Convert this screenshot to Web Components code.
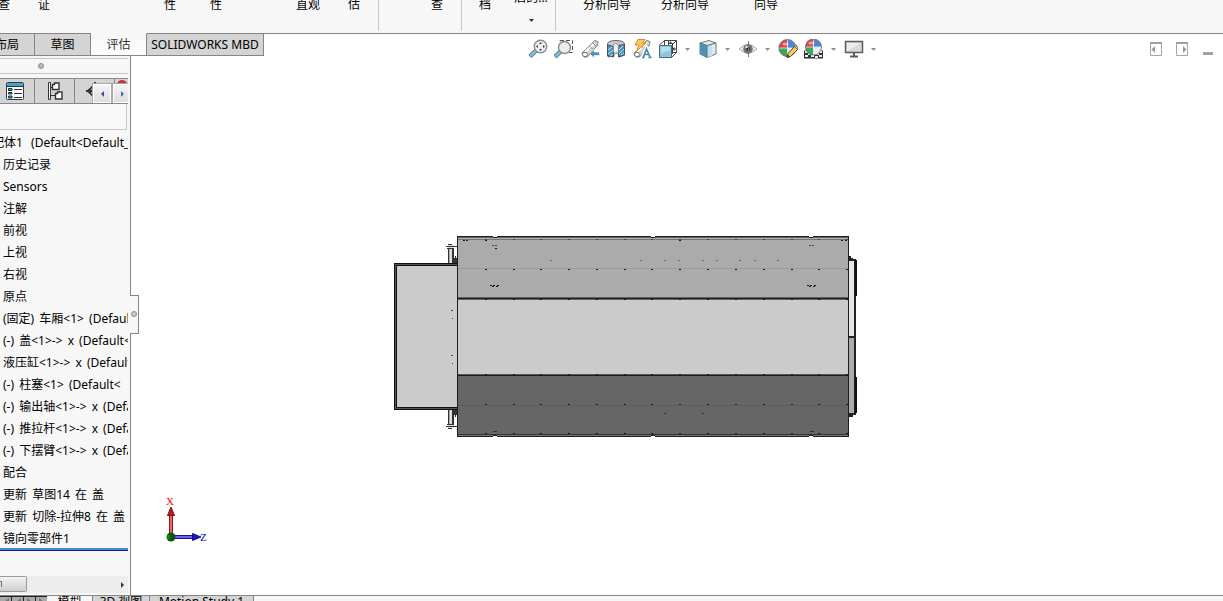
<!DOCTYPE html>
<html lang="zh-CN">
<head>
<meta charset="utf-8">
<title>SOLIDWORKS</title>
<style>
html, body { height: 100%; margin: 0; overflow: hidden; }
body { font: 12px/16px "Noto Sans", "Noto Sans CJK SC", sans-serif; color: #000; background: #fff;
  --line: #868686; --soft: #c6c6c6; --panel: #f7f7f7; --tab: #d4d4d4; }
</style>
</head>
<body>
<cad-app></cad-app>
<script>
const base = `*{box-sizing:border-box} button{font:inherit;color:inherit;border:0;padding:0;margin:0;background:none;white-space:nowrap} svg{display:block}`;
function define(name, html) {
  const t = document.createElement('template');
  t.innerHTML = html.replace('<style>', '<style>' + base);
  customElements.define(name, class extends HTMLElement {
    constructor() {
      super();
      this.attachShadow({ mode: 'open' }).append(t.content.cloneNode(true));
    }
  });
}

define('cad-ribbon', `<style>
:host{display:flex;height:34px;background:var(--panel);border-bottom:1px solid var(--line);overflow:hidden}
.group{display:flex;flex:none;height:31px;padding-right:1px;border-right:1px solid var(--soft)}
.group:last-child{border:0}
button{width:46px;height:16px;margin-top:-3px;flex:none;text-align:center}
.first{margin-left:-25px}.far{margin-left:80px}.mid{margin-left:46px}.lone{margin-left:35px}
.wide{width:78px}.lead{margin-left:12px}.next{margin-left:3px}
.two{height:32px;margin-top:-10px;display:flex;flex-direction:column;align-items:center}
.two svg{margin-top:13px}
</style>
<div class="group"><button class="first">检查</button><button>证</button><button class="far">性</button><button>性</button><button class="mid">直观</button><button>估</button></div>
<div class="group"><button class="lone">查</button></div>
<div class="group"><button>档</button><button class="two"><span>后的...</span><svg width="5" height="3"><path d="M0 0H5L2.500 3Z" fill="#333"/></svg></button></div>
<div class="group"><button class="wide lead">分析向导</button><button class="wide">分析向导</button><button class="wide next">向导</button></div>`);

define('cad-command-tabs', `<style>
:host{display:flex;height:23px;margin-top:-1px;width:264px;overflow:hidden;position:relative;z-index:1}
button{height:23px;background:var(--tab);border:1px solid var(--line);border-left:0;flex:none}
.a{width:35px;text-align:right;padding-right:15px;direction:rtl}.b{width:56px}.c{width:56px;background:linear-gradient(#f7f7f7,#fdfdfd);border-top-color:var(--panel);color:#333}.d{flex:1}
</style><button class="a">布局</button><button class="b">草图</button><button class="c">评估</button><button class="d">SOLIDWORKS MBD</button>`);

const icon = (label, body) => `<button aria-label="${label}"><svg width="20" height="20" viewBox="0 0 20 20">${body}</svg></button>`;
const caret = `<button class="caret" aria-label="更多"><svg width="8" height="20"><path d="M1 9H6L3.500 12Z" fill="#8e8e94"/></svg></button>`;
const ball = (x, y, r) => `<g transform="translate(${x} ${y})"><circle r="${r}" fill="#4c86d8"/><path d="M0 0V${-r}A${r} ${r} 0 0 0 ${-r} 0Z" fill="#df4348"/><path d="M0 0H${-r}A${r} ${r} 0 0 0 0 ${r}Z" fill="#3ca955"/><path d="M0 0V${r}A${r} ${r} 0 0 0 ${r} 0Z" fill="#e9edf4"/><path d="M0 ${-r}V${r}M${-r} 0H${r}" stroke="#e9f1fa" stroke-width=".8"/><circle r="${r}" fill="none" stroke="#5b6675" stroke-width=".7"/><ellipse cx="-2" cy="-4" rx="3" ry="1.500" fill="#fff" opacity=".5"/></g>`;
const scope = `<path d="M2 14 11.500 5 14.500 1.500 18 2.500 17.500 6 8 17.500Q3 20 2 14Z" fill="#d6d3cf" stroke="#7d7d7d"/><path d="M5 13 15 4" stroke="#fff" stroke-width="2"/><path d="M9.500 7 13 10.500M13 4 16 7" stroke="#888"/><ellipse cx="5" cy="15.500" rx="2.500" ry="2.200" fill="#fff" stroke="#777"/>`;
define('cad-view-toolbar', `<style>
:host{display:flex;align-items:flex-start;padding-top:5px;height:32px}
.views{flex:1;display:flex;justify-content:center;gap:6px}
button{width:20px;height:20px;flex:none}.views .caret{width:8px}
.win{display:flex;gap:12px;padding:0 10px 0 7px}.win button{width:14px}.win button:last-child{width:12px}
</style><div class="views">
${icon('整屏显示全图', `<path d="M2 17.500 8 11.500" stroke="#477d9b" stroke-width="4.500"/><path d="M2.500 17 8 11.500" stroke="#86bdd6" stroke-width="2.500"/><circle cx="12.500" cy="7.500" r="6.200" fill="#eceff0" stroke="#858b90" stroke-width="1.400"/><path d="M12.500 3 14 5H11ZM12.500 12 11 10H14ZM8 7.500 10 6V9ZM17 7.500 15 9V6Z" fill="#414141"/>`)}
${icon('局部放大', `<path d="M6 1.500H18.500V13.500H6Z" fill="none" stroke="#555" stroke-dasharray="4 2"/><path d="M1 18 7 12" stroke="#477d9b" stroke-width="4.500"/><path d="M1.500 17.500 7 12" stroke="#86bdd6" stroke-width="2.500"/><circle cx="10.500" cy="8.500" r="6" fill="#e8eef0" stroke="#858b90" stroke-width="1.400"/>`)}
${icon('上一视图', `${scope}<path d="M9.500 14.500 14 10.500V13H19.500V16.500H14V19Z" fill="#4e92b5" stroke="#f6f6f6" stroke-width=".7"/>`)}
${icon('剖面视图', `<path d="M1.500 5Q2 1.500 10 1.500T18.500 5V16L13 18V14H8V17L2 18Z" fill="#c9c9c9" stroke="#666"/><path d="M1.500 6 7.500 7.500V18L1.500 16.500ZM12.500 6.500 18.500 5.500V16L12.500 18Z" fill="#4b91b5" stroke="#34586a"/><path d="M2 11 6 8M2 15 7 11M4 17 7 15M13 11 17 7M13 15 18 10M15 16 18 14" stroke="#c5e4f0"/><path d="M7.500 8Q7 4.500 10 4.500T12.500 8V14H7.500Z" fill="#f0f0f0" stroke="#777" stroke-width=".7"/>`)}
${icon('动态注解视图', `${scope}<path d="M6 .5H13L10.500 4H14L4.500 12 7 6H3Z" fill="#ffc563" stroke="#dd8b21"/><path d="M10.500 19 14.500 9.500 18.500 19M12 16H17" fill="none" stroke="#fff" stroke-width="4"/><path d="M10 18.500H12.500M16.500 18.500H19.500M11.500 18 14.500 10 18 18M12.500 15.500H16.500" fill="none" stroke="#478bb0" stroke-width="1.700"/>`)}
${icon('视图定向', `<path d="M1.500 6 6.500 1.500H18.500V13.500L13.500 18.500M6.500 1.500V6M18.500 1.500 13.500 6.500M10.500 1.500V6M14 10H18M13.500 13.500H18.500M14.500 4V15" fill="none" stroke="#444"/><path d="M14 10 16.500 8V12ZM12.500 2 14.500 5H10.500Z" fill="#444"/><path d="M1.500 6.500H13.500V18.500H1.500Z" fill="#91c5db" stroke="#426d82"/><path d="M3 8H12V12Q6 12 3 15Z" fill="#b4dfed"/>`)}${caret}
${icon('显示样式', `<path d="M2 4 11 1.500 18 4V15L9 18.500 2 15Z" fill="#e3e8ea" stroke="#6c777b"/><path d="M2 4 9 6.500V18.500L2 15Z" fill="#4c93b4"/><path d="M9 6.500 14 5V16.500L9 18.500Z" fill="#b9e1ee"/><path d="M2 4 9 6.500 18 4M9 6.500V18.500" fill="none" stroke="#56717d"/>`)}${caret}
${icon('隐藏/显示项目', `<path d="M1 10Q10 1 19 10 10 18 1 10Z" fill="#efefef" stroke="#aaa"/><circle cx="10" cy="10" r="4.800" fill="#747474"/><circle cx="10" cy="10" r="2" fill="#303030"/><path d="M10.500 2V18" stroke="#777"/><circle cx="8.500" cy="8" r="1.200" fill="#eee"/>`)}${caret}
${icon('编辑外观', `${ball(9.5, 9, 8.6)}<path d="M9 18.500 10 14.500 16.500 7.500 19.500 10.500 12.500 17.500Z" fill="#f4cf65" stroke="#4e4026"/><path d="M16.500 7.500 18 6 20 8.500 19.500 10.500Z" fill="#e7a8a0" stroke="#675"/><path d="M9 18.500 9.800 15.500 11.800 17.500Z" fill="#333"/>`)}
${icon('应用布景', `<path d="M0 11.500H19V19.500H0Z" fill="#333"/><path d="M1 12H4V14H1ZM15 12H18V14H15ZM4 14H6V16H4ZM13 14H15V16H13ZM1 16H4V18H1ZM7 16H10V18H7ZM15 16H18V18H15ZM11 17H14V19H11Z" fill="#eee"/>${ball(9.5, 8, 8)}`)}${caret}
${icon('视图设定', `<path d="M1.500 2.500H18.500V13.500H1.500Z" fill="#d9d9d9" stroke="#5c5c5c" stroke-width="1.500"/><path d="M3 4H17L3 12Z" fill="#eee"/><path d="M10 14V17M6 17.500H14" stroke="#5a5a5a" stroke-width="2"/>`)}${caret}
</div><div class="win">
<button aria-label="左侧窗格"><svg width="13" height="20"><path d="M1.500 4V16.500H12.500V4" fill="none" stroke="#a6a6a6"/><path d="M1 4H13" stroke="#a0a0a0" stroke-width="2"/><path d="M2.500 10.500 6 7V14Z" fill="#999"/></svg></button>
<button aria-label="右侧窗格"><svg width="13" height="20"><path d="M1.500 4V16.500H12.500V4" fill="none" stroke="#a6a6a6"/><path d="M1 4H13" stroke="#a0a0a0" stroke-width="2"/><path d="M11.500 10.500 8 7V14Z" fill="#999"/></svg></button>
<button aria-label="最小化"><svg width="12" height="20"><path d="M2 13H12V16H2Z" fill="#a2a2a2"/></svg></button></div>`);

define('cad-manager-tabs', `<style>
:host{display:flex;position:relative;height:26px;background:var(--tab);border:solid var(--line);border-width:1px 0;overflow:hidden}
button{height:24px;flex:none;border-right:1px solid var(--line);display:flex;align-items:center;justify-content:center}
.a{width:35px;padding-right:4px}.b{width:40px}.c{width:40px;justify-content:flex-start;padding-left:11px}.d{width:14px;border:0;align-items:flex-start}
.spin{position:absolute;right:-4px;bottom:-1px;display:flex;gap:2px;background:#a9a9ae;border:1px solid #a9a9ae}
.spin button{width:18px;height:19px;border:1px solid #fff;background:linear-gradient(#f4f4f6,#dcdce2)}
</style>
<button class="a" aria-label="属性管理器"><svg width="18" height="18" viewBox="0 0 18 18"><rect x=".5" y=".5" width="17" height="17" rx="1" fill="#fff" stroke="#2f3e45"/><path d="M1 1H17V4H1Z" fill="#4aa0c6"/><path d="M1 4.500H17" stroke="#333"/><path d="M2.500 6.500H6V8.500H2.500ZM2.500 10.500H6V12H2.500ZM2.500 14H6V16H2.500Z" fill="#4aa0c6" stroke="#183442"/><path d="M8 7.500H16M8 11.500H16M8 15.500H16" stroke="#333"/></svg></button>
<button class="b" aria-label="配置管理器"><svg width="16" height="18" viewBox="0 0 16 18"><path d="M1.500.5V17.500H3.500V.5ZM3.500 5.500H7M3.500 13.500H9" fill="#fff" stroke="#333"/><path d="M5.500 2.500H7.500V1H12V7.500H5.500ZM8.500 11.500H10.500V10H15V17H8.500Z" fill="#fff" stroke="#333" stroke-width="1.400"/></svg></button>
<button class="c" aria-label="尺寸管理器"><svg width="18" height="18" viewBox="0 0 18 18"><circle cx="9" cy="9" r="5" fill="none" stroke="#333" stroke-width="2"/><path d="M0 9H18M9 0V18" stroke="#333" stroke-width="2"/><path d="M0 9 4 6V12Z" fill="#333"/></svg></button>
<button class="d" aria-label="显示管理器"><svg width="10" height="6"><path d="M0 5Q1 1 5 1T10 5Z" fill="#c83432"/></svg></button>
<div class="spin"><button aria-label="向左"><svg width="3" height="6"><path d="M3 0V6L0 3Z" fill="#35508e"/></svg></button><button aria-label="向右"><svg width="3" height="6"><path d="M0 0V6L3 3Z" fill="#4b69b4"/></svg></button></div>`);

const rows = ['装配体1  (Default<Default_', '历史记录', 'Sensors', '注解', '前视', '上视', '右视', '原点', '(固定) 车厢<1> (Default', '(-) 盖<1>-> x (Default<', '液压缸<1>-> x (Default', '(-) 柱塞<1> (Default<', '(-) 输出轴<1>-> x (Default', '(-) 推拉杆<1>-> x (Default', '(-) 下摆臂<1>-> x (Default', '配合', '更新 草图14 在 盖', '更新 切除-拉伸8 在 盖', '镜向零部件1'];
const parts = row => row.replace(/</g, '&lt;').replace(/>/g, '&gt;').split(/(?<=\s)(?=\S)/).map(p => `<span>${p}</span>`).join('');
define('cad-feature-tree', `<style>
:host{display:block}
ul{list-style:none;margin:0;padding:0 0 0 3px;overflow:hidden;border-bottom:1px solid #1c1c9c}
li{height:22px;line-height:22px;white-space:pre}
li:first-child{margin-left:-23px}
span+span{margin-left:2px}
.end{height:2px;background:#3a8fc8;margin-top:-3px;position:relative}
</style><ul>${rows.map(r => `<li>${parts(r)}</li>`).join('')}</ul><div class="end"></div>`);

define('cad-side-panel', `<style>
:host{display:flex;flex-direction:column;background:var(--panel);border-right:1px solid var(--line);padding-right:2px;overflow:hidden}
.grip{height:16px;margin:2px 0 4px;border:solid var(--soft);border-width:1px 0;display:flex;align-items:center;padding-left:38px;flex:none}
.grip i{width:6px;height:6px;border-radius:3px;background:#bbb;border:1px solid #8b8b8b}
cad-manager-tabs{flex:none}
input{display:block;flex:none;height:26px;width:127px;border:solid var(--soft);border-width:0 1px 1px 0;background:#f8f8f8;margin:0 0 2px;padding:0;font:inherit}
.bar{margin:auto 0 2px;height:17px;display:flex;justify-content:space-between;background:#ededed;flex:none}
.thumb{width:27px;height:16px;border:1px solid #9a9a9a;border-left:0;border-radius:0 2px 2px 0;background:linear-gradient(#f3f3f3,#cfcfcf)}
.arrow{width:12px;padding-left:5px}
</style><div class="grip"><i></i></div><cad-manager-tabs></cad-manager-tabs><input type="text" aria-label="过滤"><cad-feature-tree></cad-feature-tree>
<div class="bar"><button class="thumb" aria-label="滚动"><svg width="4" height="8"><path d="M1.500 1V7M0 1.500H2" stroke="#777"/></svg></button><button class="arrow" aria-label="向右滚动"><svg width="3" height="6"><path d="M0 0V6L3 3Z" fill="#333"/></svg></button></div>`);

const dots = (list, y, c = '#1a1a1a') => list.map(x => `<path d="M${x} ${y}h2v1h-2z" fill="${c}"/>`).join('');
const seams = [485, 513, 540, 568, 596, 624, 651, 679, 707, 735, 763, 791, 818, 846];
const cyl = `<path d="M448 245H454V264H448Z" fill="#ddd"/><path d="M448 248h1v16h-1zM452 248h2v16h-2z" fill="#333"/><path d="M449 248h1v16h-1z" fill="#aaa"/><path d="M446 246h11v1h-11zM448 244h4v1h-4zM447 248h5v1h-5zM454 258h3v5h-3zM455 256h1v3h-1z" fill="#333"/>`;
define('cad-model', `<style>:host{display:block}</style>
<svg width="464" height="204" viewBox="394 235 464 204" shape-rendering="crispEdges">
${cyl}<g transform="translate(0 673) scale(1 -1)">${cyl}</g>
<path d="M394 263H458V410H394Z" fill="#111"/><path d="M395 264H457V409H395Z" fill="#555"/><path d="M396 265H457V408H396Z" fill="#111"/><path d="M397 266H457V407H397Z" fill="#cbcbcb"/>
<path d="M451 310h2v1h-2zM452 318h1v1h-1zM451 355h2v1h-2zM452 363h1v1h-1z" fill="#444"/>
<path d="M849 256h2v2h2v1h3v156h-3v2h-4z" fill="#222"/><path d="M855 260h2v36h-2zM855 377h2v36h-2z" fill="#111"/><path d="M849 261h5v75h-5z" fill="#e6e6e6"/><path d="M849 338h5v75h-5z" fill="#ababab"/>
<path d="M457 236H849V437H457Z" fill="#1d1d1d"/>
<path d="M458 237H848V297H458Z" fill="#ababab"/><path d="M458 237h390v1h-390z" fill="#666"/><path d="M458 239h390v1h-390z" fill="#777"/><path d="M458 268h390v1h-390z" fill="#9c9c9c"/>
<path d="M458 297h390v1h-390zM458 299h390v1h-390z" fill="#626262"/>
<path d="M458 300H848V374H458Z" fill="#cbcbcb"/><path d="M458 374h390v1h-390z" fill="#555"/>
<path d="M458 376H848V436H458Z" fill="#666"/><path d="M458 405h390v1h-390z" fill="#5c5c5c"/><path d="M458 434h390v1h-390z" fill="#333"/><path d="M458 435h390v1h-390z" fill="#777"/>
${dots(seams, 269)}${dots(seams, 299)}${dots(seams, 374)}${dots(seams, 404)}${dots(seams, 433)}${dots(seams, 239, '#444')}
${dots([550, 640, 664, 678, 702, 716, 739, 754, 777], 260, '#666')}${dots([664, 702], 413, '#333')}
${dots([463, 466, 485, 679, 841, 845], 240)}
${dots([492, 495, 809, 812], 245, '#444')}${dots([495], 248)}${dots([490, 493, 497, 807, 810, 814], 285)}${dots([492, 496, 809, 813], 286)}${dots([493, 495, 810, 812], 431, '#333')}
${[495, 653, 811].map(x => `<path d="M${x - 2} 236h4v1h-4zM${x - 2} 436h4v1h-4z" fill="#fff"/><path d="M${x - 2} 237h4v1h-4zM${x - 2} 435h4v1h-4z" fill="#222"/>`).join('')}
</svg>`);

define('cad-canvas', `<style>
:host{display:block;position:relative;background:#fff;overflow:hidden}
cad-model{position:absolute;left:263px;top:169px}
.triad{position:absolute;left:32px;bottom:50px}
text{font:11px "Liberation Serif",serif}
</style><cad-model></cad-model>
<svg class="triad" width="48" height="52" viewBox="163 493 48 52">
<path d="M169.500 515H172.500V536H169.500Z" fill="#e96868" stroke="#8e1717"/><path d="M171 507 174.500 515.500H167.500Z" fill="#c41c1c" stroke="#751515"/>
<path d="M172 535.500H193V538.500H172Z" fill="#6868e4" stroke="#17178e"/><path d="M201 537 192.500 533.500V540.500Z" fill="#1919c4" stroke="#14147c"/>
<circle cx="171" cy="537" r="4.500" fill="#165017"/><path d="M167 535H170V539H167Z" fill="#0a8b0a"/>
<text x="166" y="505" fill="#f00">X</text><text x="200" y="541" fill="#00e">Z</text></svg>`);

define('cad-study-tabs', `<style>
:host{display:flex;height:6px;overflow:hidden;border-top:1px solid var(--line);background:var(--panel)}
.nav{display:flex;width:47px;background:#222;padding-top:1px;gap:1px;flex:none}
.nav button{flex:1;height:16px;background:#aaa;display:flex;justify-content:center;padding-top:1px}
.tab{height:20px;margin-top:-4px;line-height:16px;flex:none;border-right:1px solid var(--line);background:var(--tab)}
.m{width:46px;background:var(--panel)}.v{width:57px}.s{width:104px}
</style><div class="nav"><button aria-label="首个"><svg width="6" height="8"><path d="M6 0V8L1 4Z" fill="#777"/></svg></button><button aria-label="上一个"><svg width="6" height="8"><path d="M6 0V8L1 4Z" fill="#777"/></svg></button><button aria-label="下一个"><svg width="6" height="8"><path d="M0 0V8L5 4Z" fill="#777"/></svg></button><button aria-label="末个"><svg width="6" height="8"><path d="M0 0V8L5 4Z" fill="#777"/></svg></button></div>
<button class="tab m">模型</button><button class="tab v">3D 视图</button><button class="tab s">Motion Study 1</button>`);

define('cad-app', `<style>
:host{display:grid;height:100vh;grid-template-rows:auto 1fr auto}
main{position:relative;min-height:0;display:grid;grid-template-columns:131px 133px 1fr;grid-template-rows:22px 10px minmax(0,1fr)}
cad-command-tabs{grid-area:1/1/2/3}
cad-view-toolbar{grid-area:1/3/3/4}
cad-side-panel{grid-area:2/1/4/2}
cad-canvas{grid-area:3/2/4/4}
.split{position:absolute;left:130px;top:50%;margin-top:-20px;width:9px;height:39px;background:var(--panel);border:1px solid var(--line);border-left:0;display:flex;align-items:center}
.split i{width:6px;height:6px;border-radius:3px;background:#ccc;border:1px solid #8b8b8b;margin-left:1px}
</style><cad-ribbon></cad-ribbon>
<main><cad-command-tabs></cad-command-tabs><cad-view-toolbar></cad-view-toolbar><cad-side-panel></cad-side-panel><cad-canvas></cad-canvas><button class="split" aria-label="折叠面板"><i></i></button></main>
<cad-study-tabs></cad-study-tabs>`);
</script>
</body>
</html>
